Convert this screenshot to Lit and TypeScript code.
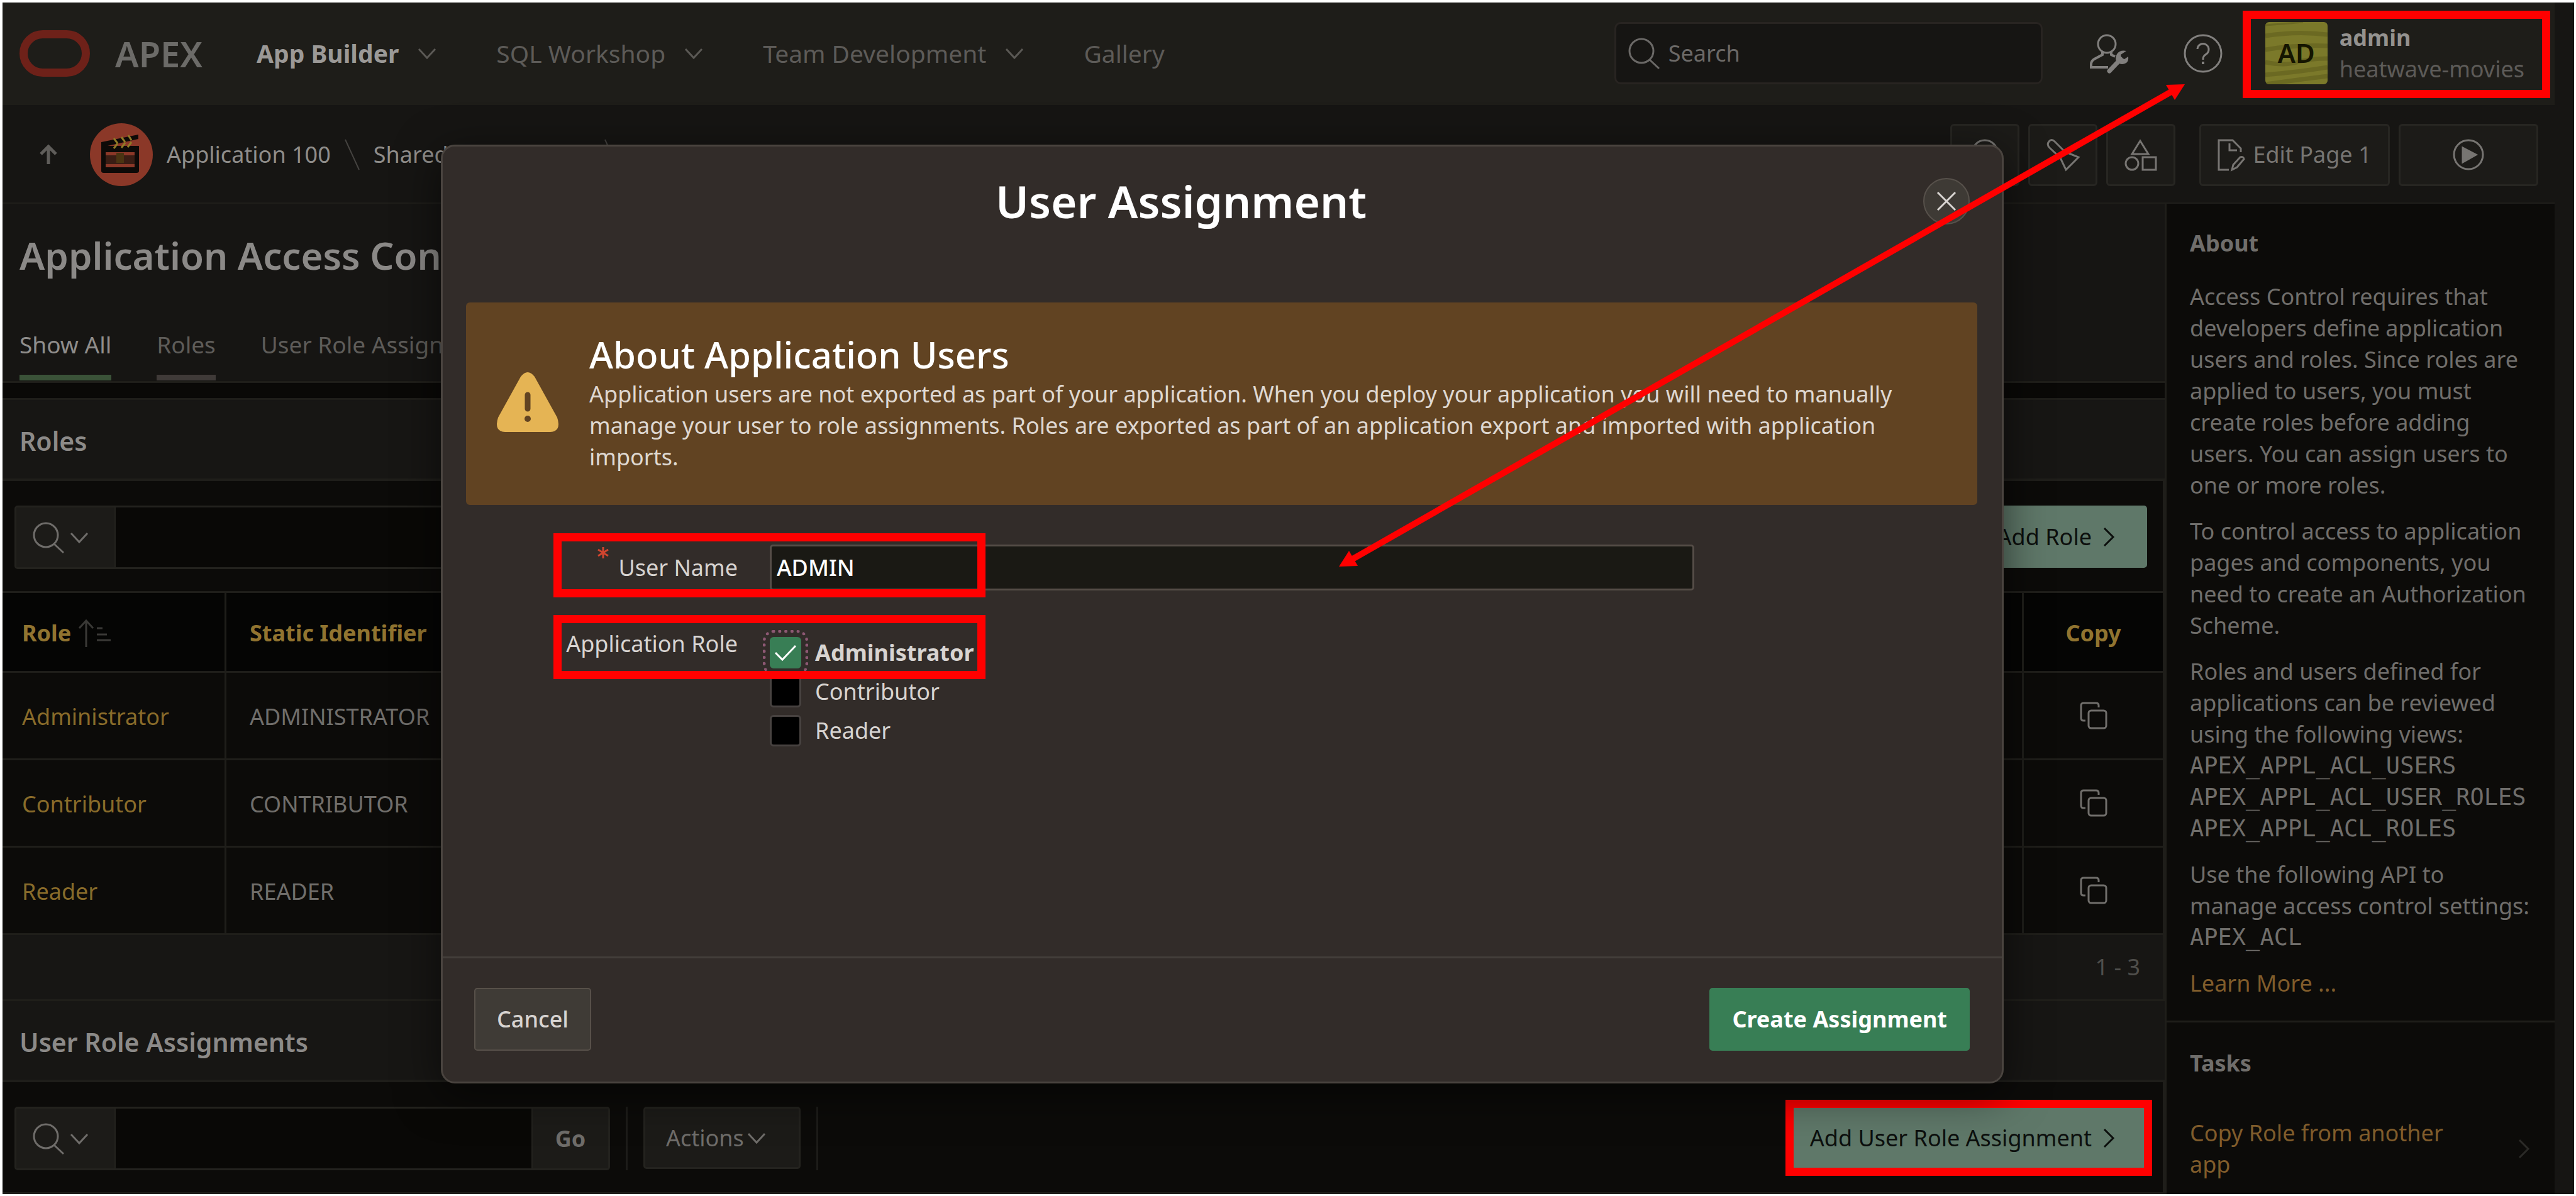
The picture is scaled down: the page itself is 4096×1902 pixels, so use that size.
import { LitElement, html, svg, css, nothing } from "lit";
import { customElement, property, state } from "lit/decorators.js";
import { classMap } from "lit/directives/class-map.js";

const base = css`
  * {
    box-sizing: border-box;
  }
  h1, h2, h3, p, ul {
    margin: 0;
    padding: 0;
    font-weight: inherit;
    font-size: inherit;
  }
  ul {
    list-style: none;
  }
  a {
    color: inherit;
    text-decoration: none;
  }
  button, input {
    font: inherit;
    color: inherit;
    margin: 0;
    padding: 0;
    border: 0;
    background: none;
    border-radius: 0;
    outline: none;
  }
  button {
    white-space: nowrap;
    cursor: pointer;
  }
  svg {
    display: block;
    flex: none;
    overflow: visible;
  }
  .mark {
    position: absolute;
    border: 13px solid #ff0000;
    pointer-events: none;
  }
`;

const line = (w: number, h: number, body: unknown, stroke = 3) => html`
  <svg width=${w} height=${h} viewBox="0 0 ${w} ${h}" fill="none" stroke="currentColor" stroke-width=${stroke} aria-hidden="true">${body}</svg>`;

const icons = {
  chevronDown: () => line(28, 16, svg`<path d="M1 1 14 15 27 1"/>`),
  chevronRight: () => line(16, 30, svg`<path d="M1 1 15 15 1 29"/>`),
  search: () => line(50, 50, svg`<circle cx="21" cy="21" r="19"/><path d="M34 35 49 49"/>`),
  up: () => line(28, 32, svg`<path d="M14 31V3M2 15 14 3 26 15"/>`, 5),
  slash: () => line(24, 50, svg`<path d="M1 1 23 49"/>`, 2),
  help: () => line(62, 62, svg`<circle cx="31" cy="31" r="29"/><path d="M22 24a9 9 0 1 1 14 8c-4 3-5 4-5 9"/><path d="M31 44v4" stroke-width="4"/>`),
  admin: () => line(62, 63, svg`
    <circle cx="27" cy="17" r="14"/>
    <path d="M20 30v4L7 41Q2 44 2 49v5h27M34 30v4l6 3" stroke-width="4"/>
    <path d="M31 60 49 41" stroke-width="7" stroke-linecap="round"/>
    <path d="M58 28Q48 26 43 33 40 39 42 45 50 52 58 47 62 44 61 37L55 41 50 39 49 34Z" fill="currentColor" stroke="none"/>`),
  person: () => line(50, 50, svg`<circle cx="25" cy="22" r="20"/><path d="M13 17a15 15 0 0 1 24 0"/>`),
  brush: () => line(50, 50, svg`<path d="M3 4Q7-1 12 4L30 22M21 30 4 14Q-1 9 3 4M30 21 50 29 30 49 21 30Z"/>`),
  shapes: () => line(50, 50, svg`<path d="M24 3 37 24H11Z"/><circle cx="11" cy="39" r="10"/><path d="M28 29H49V49H28Z"/>`),
  editPage: () => line(44, 50, svg`<path d="M18 49H2V2H24L37 15V21M19 7V18H31"/><path d="M23 49 25 41 36 29Q41 27 42 32L31 45Z"/>`),
  play: () => line(50, 50, svg`<circle cx="25" cy="25" r="23"/><path d="M16 14 37 25 16 37Z" fill="currentColor"/>`),
  sort: () => line(52, 44, svg`<path d="M12 44V2M1 14 12 2 23 14M29 14h9M29 24h16M29 33h22"/>`),
  copy: () => line(44, 44, svg`<rect x="14" y="14" width="28" height="28" rx="4"/><path d="M9 30H6Q2 30 2 26V6Q2 2 6 2H26Q30 2 30 6V9"/>`),
  close: () => line(32, 32, svg`<path d="M2 2 30 30M30 2 2 30"/>`),
  check: () => line(34, 26, svg`<path d="M1 13 12 24 33 2"/>`),
};

@customElement("apex-header")
class ApexHeader extends LitElement {
  static styles = [base, css`
    :host {
      display: flex;
      align-items: center;
      height: 163px;
      padding: 0 48px 2px 27px;
      background: #1e1d19;
      color: #5d5b58;
      font-size: 39px;
      line-height: 50px;
    }
    .brand {
      display: flex;
      align-items: center;
      gap: 40px;
      width: 377px;
      font-size: 56px;
      font-weight: 600;
      color: #6c6b68;
    }
    .logo {
      width: 112px;
      height: 74px;
      border: 13px solid #6e2119;
      border-radius: 37px;
    }
    .nav {
      display: flex;
      flex: 1;
      gap: 96px;
    }
    .item {
      display: flex;
      align-items: center;
      gap: 31px;
    }
    .current {
      font-weight: 700;
      color: #9b9997;
    }
    .item svg {
      color: #5b5955;
    }
    .search {
      display: flex;
      align-items: center;
      gap: 14px;
      flex: 0 1 681px;
      height: 99px;
      padding: 0 19px;
      margin-right: 75px;
      border: 3px solid #282421;
      border-radius: 10px;
      background: #161513;
      color: #6b6967;
      font-size: 36px;
    }
    .search input {
      flex: 1;
      min-width: 0;
    }
    .search input::placeholder {
      color: inherit;
      opacity: 1;
    }
    .tool {
      color: #82807e;
    }
    .admin {
      margin-right: 87px;
    }
    .help {
      margin-right: 68px;
    }
    .user {
      position: relative;
      display: flex;
      gap: 19px;
      text-align: left;
      font-size: 36px;
    }
    .avatar {
      display: grid;
      place-items: center;
      width: 99px;
      height: 99px;
      border-radius: 6px;
      overflow: hidden;
      background: #7b792a;
      color: #151500;
      font-size: 42px;
      font-weight: 600;
    }
    .avatar > * {
      grid-area: 1 / 1;
    }
    .name {
      display: block;
      font-weight: 700;
      color: #94928f;
    }
    .user .mark {
      inset: -18px -41px -21px -36px;
    }
  `];

  private nav = [
    { label: "App Builder", menu: true, current: true },
    { label: "SQL Workshop", menu: true },
    { label: "Team Development", menu: true },
    { label: "Gallery", menu: false },
  ];

  render() {
    return html`
      <a class="brand" href="#home"><span class="logo"></span><span>APEX</span></a>
      <nav class="nav">
        ${this.nav.map((n) => html`
          <a class=${classMap({ item: true, current: !!n.current })} href="#nav">${n.label}${n.menu ? icons.chevronDown() : nothing}</a>`)}
      </nav>
      <label class="search">${icons.search()}<input type="text" placeholder="Search" aria-label="Search" /></label>
      <button class="tool admin" aria-label="Administration">${icons.admin()}</button>
      <button class="tool help" aria-label="Help">${icons.help()}</button>
      <button class="user">
        <span class="avatar">
          <svg width="99" height="99" viewBox="0 0 99 99" fill="none" stroke="#6b6922" stroke-width="7" aria-hidden="true">
            <path d="M0 22Q50 14 99 20M0 44Q50 36 99 38M0 64Q30 70 50 64T99 58M0 84Q50 80 99 72M0 99Q50 92 99 86"/>
            <path d="M0 5Q40 2 60 0" stroke-width="3"/>
          </svg>
          <span>AD</span>
        </span>
        <span><span class="name">admin</span>heatwave-movies</span>
        <span class="mark"></span>
      </button>
    `;
  }
}

@customElement("apex-crumbs")
class ApexCrumbs extends LitElement {
  static styles = [base, css`
    :host {
      display: flex;
      align-items: center;
      padding: 29px 26px 26px 59px;
      border-bottom: 2px solid #1f1e1a;
      color: #8f8d8a;
      white-space: nowrap;
    }
    .up {
      margin-right: 52px;
      color: #5f5d5a;
    }
    .trail {
      display: flex;
      align-items: center;
      gap: 22px;
      flex: 1;
    }
    .trail > svg:not(.app) {
      color: #454340;
    }
    .tools {
      display: flex;
      gap: 14px;
      color: #777572;
    }
    .btn {
      display: flex;
      align-items: center;
      justify-content: center;
      gap: 12px;
      min-width: 110px;
      height: 99px;
      border: 3px solid #272622;
      border-radius: 6px;
      background: #1c1b18;
    }
    .edit {
      min-width: 303px;
      margin-left: 24px;
    }
    .run {
      min-width: 222px;
    }
  `];

  render() {
    return html`
      <button class="up" aria-label="Up">${icons.up()}</button>
      <nav class="trail">
        <svg class="app" width="100" height="100" viewBox="0 0 100 100" aria-hidden="true">
          <circle cx="50" cy="50" r="50" fill="#8b3828"/>
          <path d="M18 30 77 18V25L28 36H78V76Q78 79 74 79H22Q18 79 18 76Z" fill="#0d0a08"/>
          <path d="M38 24l6 8M50 22l6 8M61 19l5 8M44 32l-6 8M56 31l-6 8M66 30l-6 8" stroke="#8f7a26" stroke-width="3"/>
          <path d="M25 46H71V70H25Z" fill="#8b3828"/>
          <path d="M25 51H71V65H25Z" fill="#3a1d14"/>
          <path d="M42 47H54V63H42Z" fill="#4a3412"/>
        </svg>
        <a href="#app">Application 100</a>
        ${icons.slash()}
        <a href="#shared">Shared Components</a>
        ${icons.slash()}
      </nav>
      <div class="tools">
        <button class="btn" aria-label="Profile">${icons.person()}</button>
        <button class="btn" aria-label="Theme">${icons.brush()}</button>
        <button class="btn" aria-label="Components">${icons.shapes()}</button>
        <button class="btn edit">${icons.editPage()}Edit Page 1</button>
        <button class="btn run" aria-label="Run">${icons.play()}</button>
      </div>
    `;
  }
}

@customElement("apex-region")
class ApexRegion extends LitElement {
  @property() heading = "";
  @property() action = "";
  @property({ type: Boolean }) tools = false;
  @property({ type: Boolean }) marked = false;

  static styles = [base, css`
    :host {
      display: block;
    }
    .head {
      display: flex;
      align-items: center;
      height: 125px;
      padding: 5px 27px 0;
      background: #171614;
      color: #8c8a88;
      font-size: 41px;
      font-weight: 600;
    }
    .body {
      border-top: 4px solid #1f1e1a;
      border-right: 3px solid #1f1e1a;
      border-bottom: 3px solid #1f1e1a;
      background: #0c0b09;
    }
    .bar {
      display: flex;
      align-items: flex-start;
      padding: 39px 25px 35px 19px;
      color: #6f6d6a;
    }
    .finder {
      display: flex;
      flex: 0 1 947px;
      height: 101px;
      border: 3px solid #23221e;
      border-radius: 5px;
      background: #090806;
    }
    .pick {
      display: flex;
      align-items: center;
      gap: 10px;
      padding: 0 42px 0 26px;
      background: #1c1b18;
      border-right: 2px solid #23221e;
    }
    .finder input {
      flex: 1;
      min-width: 0;
    }
    .go {
      width: 122px;
      border-left: 2px solid #23221e;
      background: #1c1b18;
      font-weight: 700;
    }
    .rule {
      width: 3px;
      height: 101px;
      margin: 0 25px;
      background: #1d1c19;
    }
    .actions {
      display: flex;
      align-items: center;
      gap: 6px;
      width: 250px;
      height: 99px;
      padding-left: 33px;
      border: 3px solid #24231f;
      border-radius: 5px;
      background: #1c1b18;
    }
    .add {
      position: relative;
      display: flex;
      align-items: center;
      gap: 19px;
      height: 99px;
      margin-left: auto;
      padding: 0 53px 0 35px;
      border-radius: 5px;
      background: #5f7869;
      color: #0c0f0d;
    }
    .add .mark {
      inset: -11px -8px -11px -4px;
    }
  `];

  render() {
    return html`
      <h2 class="head">${this.heading}</h2>
      <div class="body">
        <div class="bar">
          <div class="finder">
            <button class="pick" aria-label="Search columns">${icons.search()}${icons.chevronDown()}</button>
            <input type="text" aria-label=${`Search ${this.heading}`} />
            ${this.tools ? html`<button class="go">Go</button>` : nothing}
          </div>
          ${this.tools ? html`
            <span class="rule"></span>
            <button class="actions">Actions${icons.chevronDown()}</button>
            <span class="rule"></span>` : nothing}
          <button class="add">${this.action}${icons.chevronRight()}${this.marked ? html`<span class="mark"></span>` : nothing}</button>
        </div>
        <slot></slot>
      </div>
    `;
  }
}

@customElement("role-table")
class RoleTable extends LitElement {
  static styles = [base, css`
    :host {
      display: block;
    }
    table {
      width: 100%;
      border-collapse: separate;
      border-spacing: 0;
      border-top: 3px solid #1f1e1a;
      table-layout: fixed;
    }
    th, td {
      height: 139px;
      padding: 4px 37px 0;
      border-right: 3px solid #1f1e1a;
      border-bottom: 3px solid #1f1e1a;
      text-align: left;
      font-weight: 400;
      color: #706e6b;
    }
    th {
      height: 127px;
      background: #050504;
      color: #917430;
      font-weight: 700;
    }
    th:first-child, td:first-child {
      width: 356px;
      padding-left: 31px;
      padding-right: 0;
    }
    th:last-child, td:last-child {
      width: 221px;
      padding-right: 0;
      padding-left: 0;
      border-right: 0;
      text-align: center;
    }
    td:last-child {
      padding-top: 0;
    }
    .sorted {
      display: flex;
      align-items: center;
      gap: 12px;
    }
    .sorted svg {
      color: #3a3936;
    }
    .role {
      color: #896b2a;
    }
    .copy {
      display: block;
      margin: 0 auto;
    }
    .foot {
      display: flex;
      align-items: center;
      justify-content: flex-end;
      height: 102px;
      padding-right: 36px;
      background: #171614;
      color: #4f4e4b;
    }
  `];

  private roles = ["Administrator", "Contributor", "Reader"];

  render() {
    return html`
      <table>
        <thead>
          <tr>
            <th><a class="sorted" href="#sort">Role${icons.sort()}</a></th>
            <th><a href="#sort">Static Identifier</a></th>
            <th>Copy</th>
          </tr>
        </thead>
        <tbody>
          ${this.roles.map((r) => html`
            <tr>
              <td><a class="role" href="#role">${r}</a></td>
              <td>${r.toUpperCase()}</td>
              <td><button class="copy" aria-label=${`Copy ${r}`}>${icons.copy()}</button></td>
            </tr>`)}
        </tbody>
      </table>
      <div class="foot">1 - 3</div>
    `;
  }
}

@customElement("apex-aside")
class ApexAside extends LitElement {
  static styles = [base, css`
    :host {
      display: block;
      border-left: 3px solid #1f1e1a;
      background: #0c0b09;
      color: #706e6b;
    }
    section {
      padding: 38px 37px 0;
    }
    section + section {
      margin-top: 34px;
      padding-top: 40px;
      border-top: 3px solid #1f1e1a;
    }
    h2 {
      margin-bottom: 35px;
      font-weight: 700;
    }
    p {
      margin-bottom: 23px;
    }
    code {
      display: block;
      font-family: "DejaVu Sans Mono", "Liberation Mono", monospace;
      font-size: 37px;
      white-space: nowrap;
    }
    a {
      color: #805c2b;
    }
    .task {
      display: flex;
      align-items: center;
      gap: 64px;
      padding-top: 26px;
    }
    .task a {
      flex: 1;
    }
    .task svg {
      margin-right: 4px;
      color: #2b2a27;
    }
  `];

  render() {
    return html`
      <section>
        <h2>About</h2>
        <p>Access Control requires that developers define application users and roles. Since roles are applied to users, you must create roles before adding users. You can assign users to one or more roles.</p>
        <p>To control access to application pages and components, you need to create an Authorization Scheme.</p>
        <p>Roles and users defined for applications can be reviewed using the following views:
          <code>APEX_APPL_ACL_USERS</code>
          <code>APEX_APPL_ACL_USER_ROLES</code>
          <code>APEX_APPL_ACL_ROLES</code>
        </p>
        <p>Use the following API to manage access control settings:
          <code>APEX_ACL</code>
        </p>
        <a href="#learn">Learn More ...</a>
      </section>
      <section>
        <h2>Tasks</h2>
        <div class="task"><a href="#copy-role">Copy Role from another app</a>${icons.chevronRight()}</div>
      </section>
    `;
  }
}

@customElement("user-dialog")
class UserDialog extends LitElement {
  @state() private roles = [
    { name: "Administrator", on: true },
    { name: "Contributor", on: false },
    { name: "Reader", on: false },
  ];

  static styles = [base, css`
    :host {
      display: flex;
      flex-direction: column;
      flex: 1;
      border: 3px solid #4a443f;
      border-radius: 22px;
      background: #322c29;
      box-shadow: 0 16px 70px rgba(0, 0, 0, 0.55);
      color: #d8d4d1;
    }
    .head {
      display: flex;
      align-items: center;
      gap: 6px;
      padding: 37px 51px 111px 0;
    }
    h1 {
      flex: 1;
      text-align: center;
      font-size: 71px;
      line-height: 100px;
      font-weight: 600;
      color: #ffffff;
    }
    .close {
      display: grid;
      place-items: center;
      width: 74px;
      height: 74px;
      border: 2px solid #57514b;
      border-radius: 50%;
      background: #3e3a35;
    }
    .alert {
      display: flex;
      align-items: center;
      gap: 48px;
      margin: 0 39px 63px 37px;
      padding: 45px 56px 51px 48px;
      border-radius: 6px;
      background: #614322;
      color: #dfd8d1;
    }
    h2 {
      font-size: 58px;
      line-height: 76px;
      font-weight: 500;
      color: #ffffff;
    }
    .row {
      position: relative;
      display: grid;
      grid-template-columns: 469px 1fr;
      column-gap: 51px;
      padding-right: 489px;
      margin-bottom: 60px;
    }
    .name {
      align-items: center;
    }
    .label {
      text-align: right;
    }
    .required {
      display: flex;
      justify-content: flex-end;
      gap: 15px;
    }
    .star {
      margin-top: -8px;
    }
    .text {
      width: 100%;
      height: 73px;
      padding: 0 8px;
      border: 3px solid #554d47;
      border-radius: 5px;
      background: #1a1914;
      color: #ffffff;
      font-weight: 500;
    }
    .name .mark {
      top: -18px;
      left: 176px;
      width: 687px;
      height: 102px;
    }
    .group {
      display: flex;
      flex-direction: column;
      align-items: flex-start;
      gap: 12px;
      padding-top: 14px;
    }
    .option {
      display: flex;
      align-items: center;
      gap: 22px;
    }
    .on {
      font-weight: 700;
    }
    .box {
      display: grid;
      place-items: center;
    }
    .box > * {
      grid-area: 1 / 1;
    }
    .box svg {
      color: #ffffff;
    }
    .box input {
      appearance: none;
      width: 50px;
      height: 50px;
      border: 3px solid #474240;
      border-radius: 6px;
      background: #000000;
    }
    .box input:checked {
      border-color: #387e55;
      background: #387e55;
      outline: 5px dotted #8d5873;
      outline-offset: 6px;
    }
    .roles .mark {
      top: -21px;
      left: 176px;
      width: 687px;
      height: 102px;
    }
    .foot {
      display: flex;
      align-items: center;
      justify-content: space-between;
      margin-top: auto;
      padding: 47px 51px 49px 50px;
      border-top: 3px solid #433e3a;
    }
    .btn {
      height: 100px;
      padding: 0 34px;
      border: 2px solid #575049;
      border-radius: 5px;
      background: #3f3b36;
      font-weight: 500;
    }
    .create {
      border-color: #387e55;
      background: #387e55;
      color: #ffffff;
      font-weight: 700;
    }
  `];

  private toggle(i: number) {
    this.roles = this.roles.map((r, n) => (n === i ? { ...r, on: !r.on } : r));
  }

  render() {
    return html`
      <header class="head">
        <h1>User Assignment</h1>
        <button class="close" aria-label="Close">${icons.close()}</button>
      </header>
      <section class="alert">
        <svg width="100" height="95" viewBox="0 0 100 95" aria-hidden="true">
          <path d="M39 7Q50-7 61 7L97 72Q104 94 86 95H14Q-4 94 3 72Z" fill="#e5b454"/>
          <path d="M50 36V58" stroke="#614322" stroke-width="9" stroke-linecap="round"/>
          <circle cx="50" cy="74" r="5" fill="#614322"/>
        </svg>
        <div>
          <h2>About Application Users</h2>
          <p>Application users are not exported as part of your application. When you deploy your application you will need to manually manage your user to role assignments. Roles are exported as part of an application export and imported with application imports.</p>
        </div>
      </section>
      <div class="row name">
        <label class="label required" for="user-name">
          <svg class="star" width="18" height="18" viewBox="0 0 18 18" stroke="#d0452f" stroke-width="3" aria-hidden="true"><path d="M9 0V18M1 4 17 14M17 4 1 14"/></svg>
          <span>User Name</span>
        </label>
        <input class="text" id="user-name" type="text" .value=${"ADMIN"} />
        <span class="mark"></span>
      </div>
      <div class="row roles" role="group" aria-labelledby="role-label">
        <span class="label" id="role-label">Application Role</span>
        <div class="group">
          ${this.roles.map((r, i) => html`
            <label class=${classMap({ option: true, on: r.on })}>
              <span class="box"><input type="checkbox" .checked=${r.on} @change=${() => this.toggle(i)} />${r.on ? icons.check() : nothing}</span>${r.name}
            </label>`)}
        </div>
        <span class="mark"></span>
      </div>
      <footer class="foot">
        <button class="btn">Cancel</button>
        <button class="btn create">Create Assignment</button>
      </footer>
    `;
  }
}

@customElement("app-root")
class AppRoot extends LitElement {
  static styles = [base, css`
    :host {
      display: block;
      font-family: "Noto Sans", "Open Sans", sans-serif;
      font-size: 36px;
      line-height: 50px;
    }
    .page {
      position: relative;
      min-height: 100vh;
      border: 3px solid #ffffff;
      border-top-width: 4px;
      border-left-width: 4px;
      padding-right: 31px;
      background: #161513;
    }
    .main {
      display: grid;
      grid-template-columns: minmax(0, 1fr) 620px;
    }
    .content {
      background: #0a0907;
    }
    .title {
      padding: 42px 27px 1px;
      margin-bottom: 24px;
      border-bottom: 3px solid #1f1e1a;
      background: #161513;
      color: #8b8987;
    }
    h1 {
      margin-bottom: 77px;
      font-size: 60px;
      line-height: 80px;
      font-weight: 600;
    }
    .tabs {
      display: flex;
      gap: 72px;
      color: #5e5c59;
      font-size: 37px;
    }
    .tab {
      display: block;
      padding-bottom: 23px;
      border-bottom: 9px solid transparent;
    }
    .active {
      border-color: #3a5238;
      color: #8f8d8b;
    }
    .hover {
      border-color: #3f3a38;
    }
    .first {
      border-top: 3px solid #1f1e1a;
    }
    .overlay {
      position: absolute;
      inset: 0;
      display: flex;
      padding: 226px 907px 176px 697px;
    }
    .arrow {
      position: absolute;
      top: 130px;
      left: 2125px;
    }
  `];

  render() {
    return html`
      <div class="page">
        <apex-header></apex-header>
        <apex-crumbs></apex-crumbs>
        <div class="main">
          <main class="content">
            <div class="title">
              <h1>Application Access Control</h1>
              <nav class="tabs">
                <a class="tab active" href="#all">Show All</a>
                <a class="tab hover" href="#roles">Roles</a>
                <a class="tab" href="#assignments">User Role Assignments</a>
              </nav>
            </div>
            <apex-region class="first" heading="Roles" action="Add Role"><role-table></role-table></apex-region>
            <apex-region heading="User Role Assignments" action="Add User Role Assignment" tools marked></apex-region>
          </main>
          <apex-aside></apex-aside>
        </div>
        <div class="overlay"><user-dialog role="dialog" aria-label="User Assignment"></user-dialog></div>
        <svg class="arrow" width="1345" height="767" viewBox="0 0 1345 767" fill="#ff0000" aria-hidden="true">
          <path d="M20 756 1325 11" stroke="#ff0000" stroke-width="10"/>
          <path d="M1345 0 1315 1 1329 25ZM0 767 30 766 16 742Z"/>
        </svg>
      </div>
    `;
  }
}
